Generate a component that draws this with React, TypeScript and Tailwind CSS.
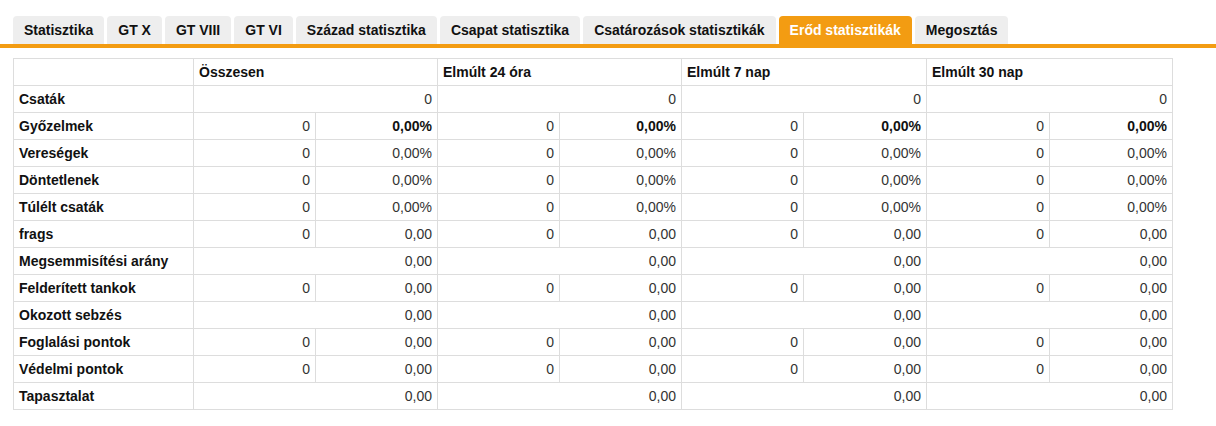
import React from 'react'

const tabs = [
  'Statisztika',
  'GT X',
  'GT VIII',
  'GT VI',
  'Század statisztika',
  'Csapat statisztika',
  'Csatározások statisztikák',
  'Erőd statisztikák',
  'Megosztás',
]

const periods = ['Összesen', 'Elmúlt 24 óra', 'Elmúlt 7 nap', 'Elmúlt 30 nap']

type Row = { label: string; kind: 'single' | 'split'; a?: string; b?: string; boldB?: boolean }

const rows: Row[] = [
  { label: 'Csaták', kind: 'single', a: '0' },
  { label: 'Győzelmek', kind: 'split', a: '0', b: '0,00%', boldB: true },
  { label: 'Vereségek', kind: 'split', a: '0', b: '0,00%' },
  { label: 'Döntetlenek', kind: 'split', a: '0', b: '0,00%' },
  { label: 'Túlélt csaták', kind: 'split', a: '0', b: '0,00%' },
  { label: 'frags', kind: 'split', a: '0', b: '0,00' },
  { label: 'Megsemmisítési arány', kind: 'single', a: '0,00' },
  { label: 'Felderített tankok', kind: 'split', a: '0', b: '0,00' },
  { label: 'Okozott sebzés', kind: 'single', a: '0,00' },
  { label: 'Foglalási pontok', kind: 'split', a: '0', b: '0,00' },
  { label: 'Védelmi pontok', kind: 'split', a: '0', b: '0,00' },
  { label: 'Tapasztalat', kind: 'single', a: '0,00' },
]

const cell = 'border border-[#ddd] h-[27px] px-[5px] py-0 align-middle'

export default function App() {
  const active = 'Erőd statisztikák'

  return (
    <div className="w-[1216px] h-[426px] bg-white text-[14px] text-[#333] font-['Liberation_Sans',Arial,sans-serif]">
      {/* Tabs */}
      <div className="flex gap-[3px] pl-[13px] pt-[16px]">
        {tabs.map((t) => (
          <div
            key={t}
            className={`h-[28px] px-[11px] rounded-t-[4px] flex items-center font-bold ${
              t === active ? 'bg-[#f39c12] text-white' : 'bg-[#eee] text-[#111]'
            }`}
          >
            {t}
          </div>
        ))}
      </div>
      <div className="h-[4px] bg-[#f39c12]" />

      {/* Stats table */}
      <div className="pt-[10px] pl-[13px]">
        <table className="border-collapse table-fixed w-[1159px]">
          <colgroup>
            <col className="w-[180px]" />
            <col className="w-[122px]" />
            <col className="w-[122px]" />
            <col className="w-[122px]" />
            <col className="w-[122px]" />
            <col className="w-[122px]" />
            <col className="w-[123px]" />
            <col className="w-[123px]" />
            <col className="w-[123px]" />
          </colgroup>
          <thead>
            <tr>
              <th className={cell}></th>
              {periods.map((p) => (
                <th key={p} colSpan={2} className={`${cell} text-left font-bold text-[#111]`}>
                  {p}
                </th>
              ))}
            </tr>
          </thead>
          <tbody>
            {rows.map((r) => (
              <tr key={r.label}>
                <td className={`${cell} font-bold text-[#111]`}>{r.label}</td>
                {periods.map((p) =>
                  r.kind === 'single' ? (
                    <td key={p} colSpan={2} className={`${cell} text-right`}>
                      {r.a}
                    </td>
                  ) : (
                    <React.Fragment key={p}>
                      <td className={`${cell} text-right`}>{r.a}</td>
                      <td className={`${cell} text-right ${r.boldB ? 'font-bold text-[#111]' : ''}`}>{r.b}</td>
                    </React.Fragment>
                  )
                )}
              </tr>
            ))}
          </tbody>
        </table>
      </div>
    </div>
  )
}
